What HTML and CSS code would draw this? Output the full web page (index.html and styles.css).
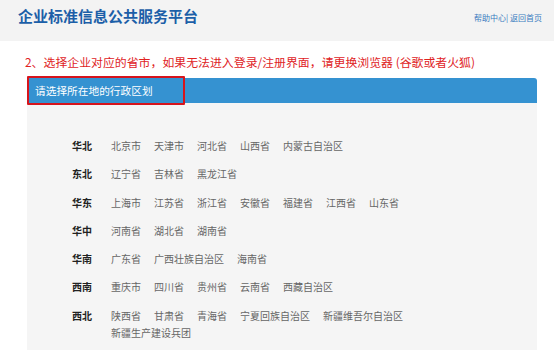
FILE: index.html
```html
<!DOCTYPE html>
<html lang="zh-CN">
<head>
    <meta charset="UTF-8">
    <meta name="viewport" content="width=device-width, initial-scale=1.0">
    <title>企业标准信息公共服务平台</title>
    <link rel="stylesheet" href="styles.css">
</head>
<body>
    <header class="top">
        <h1 class="site-title">企业标准信息公共服务平台</h1>
        <div class="top-links">
            <a href="#">帮助中心</a>| <a href="#">返回首页</a>
        </div>
    </header>

    <main class="content">
        <p class="tip">2、选择企业对应的省市，如果无法进入登录/注册界面，请更换浏览器 (谷歌或者火狐)</p>

        <section class="region-box">
            <div class="region-head">
                <span class="region-title">请选择所在地的行政区划</span>
                <span class="mark"></span>
            </div>
            <div class="region-body">
                <div class="region-row">
                    <span class="area">华北</span>
                    <ul class="prov">
                        <li>北京市</li><li>天津市</li><li>河北省</li><li>山西省</li><li>内蒙古自治区</li>
                    </ul>
                </div>
                <div class="region-row">
                    <span class="area">东北</span>
                    <ul class="prov">
                        <li>辽宁省</li><li>吉林省</li><li>黑龙江省</li>
                    </ul>
                </div>
                <div class="region-row">
                    <span class="area">华东</span>
                    <ul class="prov">
                        <li>上海市</li><li>江苏省</li><li>浙江省</li><li>安徽省</li><li>福建省</li><li>江西省</li><li>山东省</li>
                    </ul>
                </div>
                <div class="region-row">
                    <span class="area">华中</span>
                    <ul class="prov">
                        <li>河南省</li><li>湖北省</li><li>湖南省</li>
                    </ul>
                </div>
                <div class="region-row">
                    <span class="area">华南</span>
                    <ul class="prov">
                        <li>广东省</li><li>广西壮族自治区</li><li>海南省</li>
                    </ul>
                </div>
                <div class="region-row">
                    <span class="area">西南</span>
                    <ul class="prov">
                        <li>重庆市</li><li>四川省</li><li>贵州省</li><li>云南省</li><li>西藏自治区</li>
                    </ul>
                </div>
                <div class="region-row">
                    <span class="area">西北</span>
                    <ul class="prov">
                        <li>陕西省</li><li>甘肃省</li><li>青海省</li><li>宁夏回族自治区</li><li>新疆维吾尔自治区</li><li>新疆生产建设兵团</li>
                    </ul>
                </div>
            </div>
        </section>
    </main>
</body>
</html>
```

FILE: styles.css
```css
/* page basics */
body {
    margin: 0;
    font-family: "Noto Sans CJK SC", "Liberation Sans", sans-serif;
    background-color: #fff;
}
ul {
    list-style-type: none;
    margin: 0;
    padding: 0;
}

/* header */
.top {
    height: 41px;
    background-color: #f3f3f3;
    display: flex;
    justify-content: space-between;
    align-items: flex-start;
    padding: 0 12px 0 18px;
}
.site-title {
    margin: 6px 0 0;
    font-size: 15px;
    line-height: 20px;
    color: #1c5fa8;
}
.top-links {
    margin-top: 13px;
    font-size: 8px;
    line-height: 10px;
    color: #3a7cc0;
}
.top-links a {
    color: #3a7cc0;
    text-decoration: none;
}

/* content */
.content {
    padding: 0 17px 0 25px;
}
.tip {
    margin: 13px 0 8px;
    font-size: 11.9px;
    line-height: 16px;
    color: #e0231f;
}
.region-box {
    margin-left: 2px;
    width: 510px;
}
.region-head {
    position: relative;
    height: 25px;
    background-color: #3592d1;
    border-radius: 2px 3px 0 0;
    display: flex;
    align-items: center;
    padding-left: 8px;
}
.region-title {
    font-size: 10.7px;
    color: #fff;
}
/* red annotation box drawn over the bar */
.mark {
    position: absolute;
    left: 0;
    top: -2px;
    width: 154px;
    height: 25px;
    border: 2px solid #d7141c;
    border-radius: 1px;
}
.region-body {
    background-color: #f5f5f5;
    padding: 34px 0 9px 45px;
}
.region-row {
    display: flex;
    font-size: 10px;
    line-height: 17px;
    margin-bottom: 11.3px;
}
.region-row:last-child {
    margin-bottom: 0;
}
.area {
    width: 39px;
    flex-shrink: 0;
    font-weight: bold;
    color: #222;
}
.prov {
    display: flex;
    flex-wrap: wrap;
    width: 310px;
    color: #666;
}
.prov li {
    margin-right: 13px;
}
```
